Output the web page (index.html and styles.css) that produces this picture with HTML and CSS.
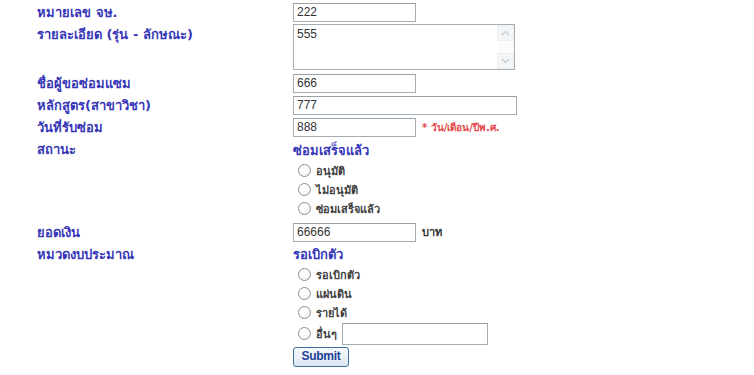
FILE: index.html
```html
<!DOCTYPE html>
<html>
<head>
<meta charset="utf-8">
<link rel="stylesheet" href="styles.css">
</head>
<body>
<form class="form">
  <div class="label">หมายเลข จษ.</div>
  <div class="field"><div class="input w122">222</div></div>

  <div class="label">รายละเอียด (รุ่น - ลักษณะ)</div>
  <div class="field">
    <div class="textarea">
      <div class="ta-text">555</div>
      <div class="scroll">
        <span class="arrow"><svg width="9" height="6" viewBox="0 0 9 6"><path d="M1 5 L4.5 1.5 L8 5" fill="none" stroke="#c9ced3" stroke-width="1.4"/></svg></span>
        <span class="arrow"><svg width="9" height="6" viewBox="0 0 9 6"><path d="M1 1 L4.5 4.5 L8 1" fill="none" stroke="#c9ced3" stroke-width="1.4"/></svg></span>
      </div>
    </div>
  </div>

  <div class="label">ชื่อผู้ขอซ่อมแซม</div>
  <div class="field"><div class="input w122">666</div></div>

  <div class="label">หลักสูตร(สาขาวิชา)</div>
  <div class="field"><div class="input w223">777</div></div>

  <div class="label">วันที่รับซ่อม</div>
  <div class="field inline"><div class="input w122">888</div><span class="note">* วัน/เดือน/ปีพ.ศ.</span></div>

  <div class="label">สถานะ</div>
  <div class="field">
    <div class="heading">ซ่อมเสร็จแล้ว</div>
    <div class="radio"><span class="dot"></span><span>อนุมัติ</span></div>
    <div class="radio"><span class="dot"></span><span>ไม่อนุมัติ</span></div>
    <div class="radio"><span class="dot"></span><span>ซ่อมเสร็จแล้ว</span></div>
  </div>

  <div class="label money">ยอดเงิน</div>
  <div class="field inline money"><div class="input w122">66666</div><span class="unit">บาท</span></div>

  <div class="label budget">หมวดงบประมาณ</div>
  <div class="field">
    <div class="heading second">รอเบิกตัว</div>
    <div class="radio"><span class="dot"></span><span>รอเบิกตัว</span></div>
    <div class="radio"><span class="dot"></span><span>แผ่นดิน</span></div>
    <div class="radio"><span class="dot"></span><span>รายได้</span></div>
    <div class="radio other"><span class="dot"></span><span>อื่นๆ</span><div class="input w145"></div></div>
    <div class="submit-row"><span class="submit">Submit</span></div>
  </div>
</form>
</body>
</html>
```

FILE: styles.css
```css
html, body {
  margin: 0;
  padding: 0;
  background: #ffffff;
}
body {
  font-family: Tahoma, "DejaVu Sans", "Noto Sans", sans-serif;
}
.form {
  display: grid;
  grid-template-columns: 256px 1fr;
  padding: 3px 0 0 37px;
  row-gap: 3px;
}
.label {
  color: #3636b6;
  font-size: 13px;
  line-height: 19px;
  font-weight: bold;
}
.field {
  min-height: 19px;
}
.money {
  margin-top: 1px;
}
.label.money {
  margin-top: 2px;
}
.inline {
  display: flex;
  align-items: center;
  gap: 6px;
}
.input {
  box-sizing: border-box;
  height: 19px;
  border: 1px solid #a4acb4;
  border-top-color: #98a0a8;
  background: #fff;
  font-family: "Liberation Sans", Arial, sans-serif;
  font-size: 12px;
  line-height: 17px;
  color: #333;
  padding: 0 3px;
}
.w122 { width: 123px; }
.w223 { width: 224px; }
.w145 { width: 146px; height: 22px; }
.textarea {
  box-sizing: border-box;
  width: 222px;
  height: 46px;
  margin-top: -1px;
  border: 1px solid #a4acb4;
  display: flex;
  justify-content: space-between;
  margin-bottom: 1px;
}
.ta-text {
  font-family: "Liberation Sans", Arial, sans-serif;
  font-size: 12px;
  color: #333;
  padding: 2px 3px;
  line-height: 14px;
}
.scroll {
  width: 17px;
  display: flex;
  flex-direction: column;
  justify-content: space-between;
  background: #fcfcfc;
}
.arrow {
  height: 16px;
  display: flex;
  align-items: center;
  justify-content: center;
  background: #f4f5f6;
  border: 1px solid #eceef0;
  box-sizing: border-box;
}
.note {
  color: #e5474b;
  font-size: 10px;
  font-weight: bold;
}
.unit {
  color: #333;
  font-size: 11px;
  font-weight: bold;
}
.heading {
  color: #3636b6;
  font-size: 13px;
  font-weight: bold;
  line-height: 20px;
  height: 20px;
  margin-top: 1px;
}
.heading.second {
  margin-top: 0;
}
.radio {
  display: flex;
  align-items: center;
  gap: 5px;
  height: 19px;
  padding-left: 1px;
  color: #404040;
  font-size: 11px;
  font-weight: bold;
}
.radio.other {
  height: 23px;
  gap: 5px;
}
.dot {
  box-sizing: border-box;
  width: 13px;
  height: 13px;
  border-radius: 50%;
  border: 1px solid #8c9399;
  background: radial-gradient(circle at 40% 40%, #ffffff 30%, #e4e6e8 100%);
  margin-left: 4px;
}
.submit-row {
  padding-top: 2px;
  line-height: 0;
}
.submit {
  display: inline-block;
  box-sizing: border-box;
  width: 56px;
  height: 20px;
  border: 1px solid #3d6fa6;
  border-radius: 3px;
  background: linear-gradient(#f6f9fc, #dce7f2);
  color: #1d3f96;
  font-family: "Liberation Sans", Arial, sans-serif;
  font-size: 12px;
  font-weight: bold;
  text-align: center;
  line-height: 17px;
  letter-spacing: -0.3px;
}
```
